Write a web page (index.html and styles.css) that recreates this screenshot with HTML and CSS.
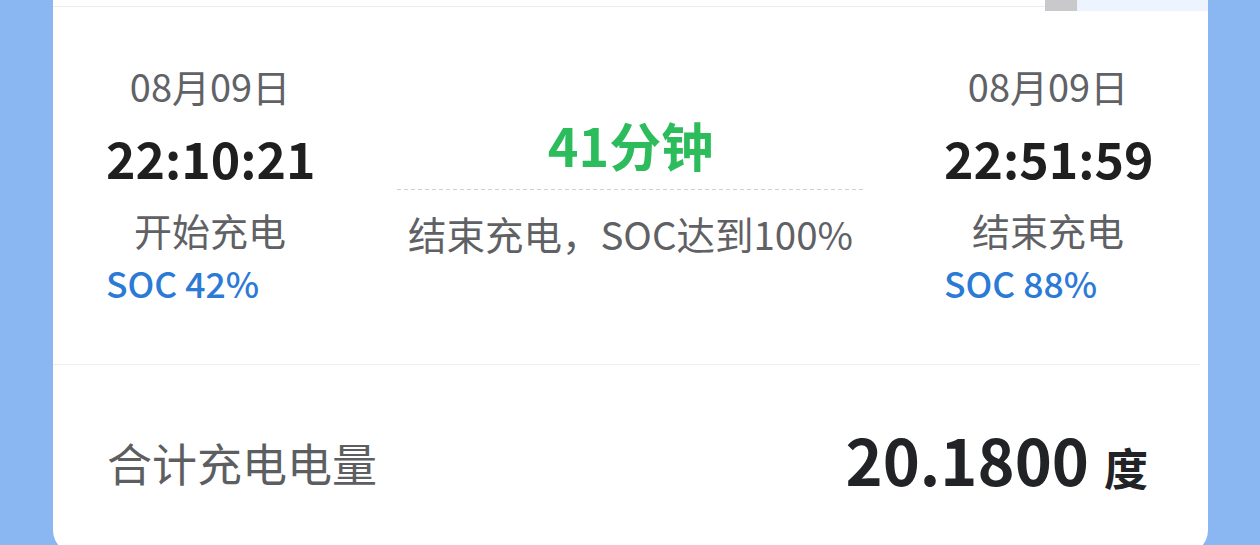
FILE: index.html
```html
<html>
<head>
    <meta charset="utf-8">
    <title>充电记录</title>
    <link rel="stylesheet" href="styles.css">
</head>
<body>
    <div class="card">
        <div class="card-top">
            <div class="top-tab"></div>
        </div>

        <section class="times">
            <div class="time-col">
                <div class="date">08月09日</div>
                <div class="clock">22:10:21</div>
                <div class="label">开始充电</div>
                <div class="soc">SOC 42%</div>
            </div>

            <div class="duration-col">
                <div class="duration">41分钟</div>
                <div class="reason">结束充电，SOC达到100%</div>
            </div>

            <div class="time-col">
                <div class="date">08月09日</div>
                <div class="clock">22:51:59</div>
                <div class="label">结束充电</div>
                <div class="soc">SOC 88%</div>
            </div>
        </section>

        <section class="total">
            <div class="total-label">合计充电电量</div>
            <div class="total-value">20.1800<span class="unit">度</span></div>
        </section>
    </div>
</body>
</html>
```

FILE: styles.css
```css
body {
    margin: 0;
    height: 545px;
    overflow: hidden;
    background: #8ab6f2;
    font-family: "Noto Sans CJK SC", "Noto Sans", sans-serif;
}
.card {
    position: relative;
    margin-left: 53px;
    width: 1155px;
    height: 554px;
    background: #fff;
    border-radius: 0 0 24px 24px;
}
.card-top {
    height: 6px;
    margin-right: 8px;
    border-bottom: 1px solid #ececec;
}
.top-tab {
    position: absolute;
    top: 0;
    left: 992px;
    width: 163px;
    height: 11px;
    background: linear-gradient(to right, #c9c9cc 0, #c9c9cc 32px, #eef4fd 32px);
}
.times {
    display: flex;
    justify-content: space-between;
    align-items: flex-start;
    padding: 54px 48px 55px 53px;
    margin-right: 8px;
    border-bottom: 1px solid #eeeeee;
}
.time-col {
    width: 208px;
    text-align: center;
}
.date {
    font-size: 38px;
    line-height: 50px;
    color: #606266;
}
.clock {
    font-size: 50px;
    line-height: 92px;
    font-weight: bold;
    color: #1f1f1f;
}
.label {
    font-size: 38px;
    line-height: 54px;
    color: #5f6165;
}
.soc {
    font-size: 35.5px;
    line-height: 52px;
    font-weight: 500;
    color: #2b7ad6;
    text-align: left;
}
.duration-col {
    width: 468px;
    margin: 54px 0 0 3px;
    text-align: center;
}
.duration {
    font-size: 52px;
    line-height: 60px;
    font-weight: bold;
    color: #2dbc5c;
    padding-bottom: 15px;
    background: repeating-linear-gradient(to right, #cfcfcf 0, #cfcfcf 4px, transparent 4px, transparent 7px) bottom / 100% 1px no-repeat;
}
.reason {
    margin-top: 13px;
    font-size: 38.5px;
    line-height: 60px;
    color: #5f6165;
}
.total {
    display: flex;
    justify-content: space-between;
    align-items: center;
    box-sizing: border-box;
    height: 189px;
    padding: 7px 60px 0 54px;
}
.total-label {
    font-size: 45px;
    line-height: 60px;
    color: #5c5e62;
}
.total-value {
    font-size: 63px;
    line-height: 80px;
    font-weight: bold;
    color: #222326;
}
.unit {
    margin-left: 15px;
    font-size: 44px;
}
```
